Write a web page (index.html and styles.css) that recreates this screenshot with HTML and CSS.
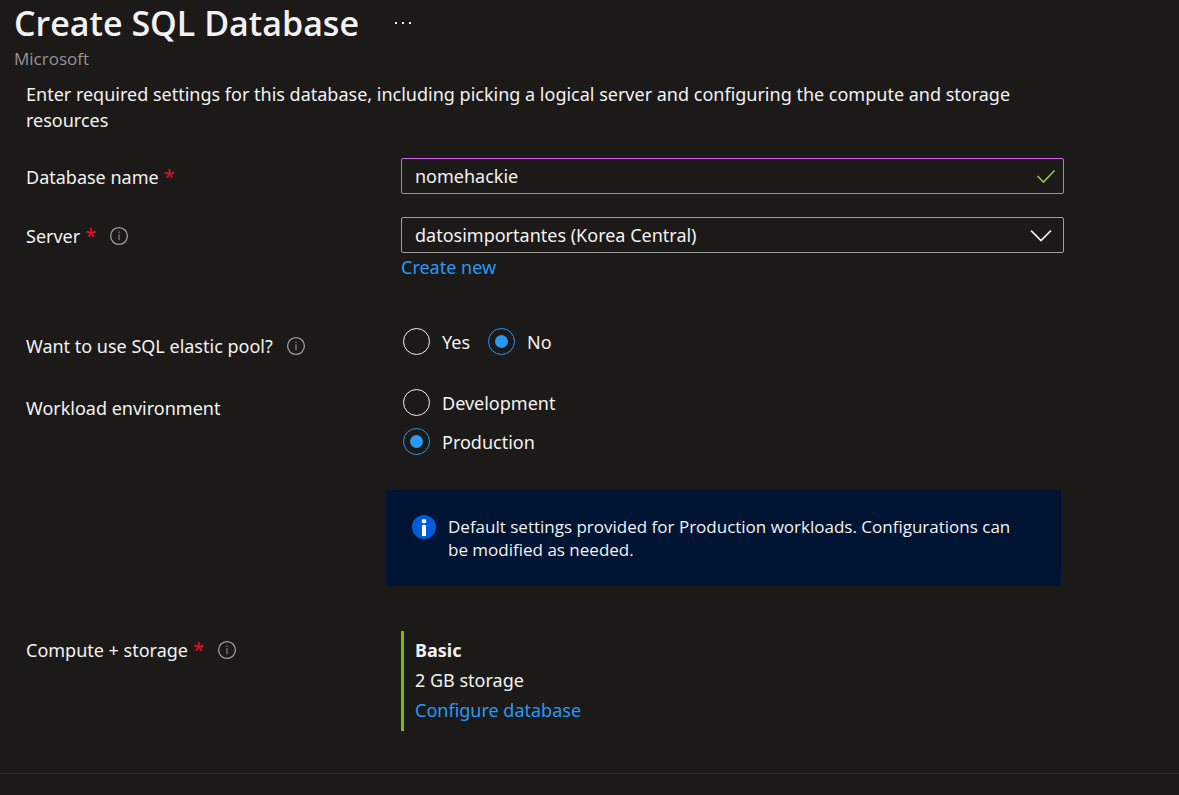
FILE: index.html
```html
<!DOCTYPE html>
<html lang="en">
<head>
<meta charset="utf-8">
<meta name="viewport" content="width=device-width, initial-scale=1">
<title>Create SQL Database</title>
<link rel="stylesheet" href="styles.css">
</head>
<body>
<svg class="sprite" aria-hidden="true">
  <symbol id="info" viewBox="0 0 20 20">
    <circle cx="10" cy="10" r="8.4" fill="none" stroke="currentColor" stroke-width="1.3"/>
    <path d="M10 8.2v6M10 5.4v1.6" fill="none" stroke="currentColor" stroke-width="1.3" opacity=".75"/>
  </symbol>
</svg>
<header class="page-header">
  <div class="title-row">
    <h1 class="title">Create SQL Database</h1>
    <button class="more" type="button" aria-label="More actions">
      <svg class="more-icon" viewBox="0 0 18 4" aria-hidden="true"><path d="M1 1h2v2H1zM8 1h2v2H8zM15 1h2v2h-2z" fill="currentColor"/></svg>
    </button>
  </div>
  <p class="publisher">Microsoft</p>
</header>
<main>
  <form class="form">
    <p class="intro">Enter required settings for this database, including picking a logical server and configuring the compute and storage resources</p>

    <div class="row">
      <div class="label-cell">
        <label for="db-name">Database name</label><span class="required">*</span>
      </div>
      <div class="field field-valid">
        <input class="control" id="db-name" type="text" value="nomehackie" required>
        <svg class="field-icon check" viewBox="0 0 20 20" aria-hidden="true"><path d="M1.5 10l6 6L18.500 4.500" fill="none" stroke="currentColor" stroke-width="1.6"/></svg>
      </div>
    </div>

    <div class="row row-server">
      <div class="label-cell">
        <label for="server">Server</label><span class="required">*</span>
        <svg class="info-icon" role="img" aria-label="Server information"><use href="#info"/></svg>
      </div>
      <div>
        <div class="field">
          <select class="control" id="server"><option>datosimportantes (Korea Central)</option></select>
          <svg class="field-icon chevron" viewBox="0 0 20 20" aria-hidden="true"><path d="M1 6L10 15 19 6" fill="none" stroke="currentColor" stroke-width="1.5"/></svg>
        </div>
        <a class="link create-link" href="#">Create new</a>
      </div>
    </div>

    <div class="row row-pool" role="radiogroup" aria-labelledby="pool-label">
      <div class="label-cell">
        <span id="pool-label">Want to use SQL elastic pool?</span>
        <svg class="info-icon" role="img" aria-label="Elastic pool information"><use href="#info"/></svg>
      </div>
      <div class="choices">
        <label class="choice"><input class="radio" type="radio" name="pool">Yes</label>
        <label class="choice"><input class="radio" type="radio" name="pool" checked>No</label>
      </div>
    </div>

    <div class="row row-env" role="radiogroup" aria-labelledby="env-label">
      <div class="label-cell"><span id="env-label">Workload environment</span></div>
      <div class="choices choices-stacked">
        <label class="choice"><input class="radio" type="radio" name="env">Development</label>
        <label class="choice"><input class="radio" type="radio" name="env" checked>Production</label>
      </div>
    </div>

    <div class="notice">
      <svg class="notice-icon" viewBox="0 0 24 24" aria-hidden="true">
        <circle cx="12" cy="12" r="12" fill="#015cda"/>
        <circle cx="12" cy="6.200" r="2.300" fill="#fff"/>
        <path d="M10 10h4v11h-4z" fill="#fff"/>
      </svg>
      <p class="notice-text">Default settings provided for Production workloads. Configurations can be modified as needed.</p>
    </div>

    <div class="row row-compute">
      <div class="label-cell">
        <span>Compute + storage</span><span class="required">*</span>
        <svg class="info-icon" role="img" aria-label="Compute and storage information"><use href="#info"/></svg>
      </div>
      <div class="tier">
        <strong>Basic</strong>
        <span>2 GB storage</span>
        <a class="link" href="#">Configure database</a>
      </div>
    </div>
  </form>
</main>
<footer class="page-footer"></footer>
</body>
</html>
```
FILE: styles.css
```css
* { box-sizing: border-box; }

body {
  margin: 0;
  min-height: 100vh;
  display: flex;
  flex-direction: column;
  background: #1b1a19;
  color: #f3f2f1;
  font-family: "Segoe UI", "Noto Sans", "Open Sans", sans-serif;
  font-size: 18px;
  line-height: 26px;
}

h1, p { margin: 0; }

.sprite { display: none; }

.page-header {
  padding-left: 14px;
  font-family: "Segoe UI", "Open Sans", sans-serif;
}

.title-row {
  display: flex;
  align-items: center;
  gap: 35px;
}

.title {
  font-size: 34px;
  line-height: 46px;
  font-weight: 600;
}

.more {
  display: flex;
  padding: 0;
  border: 0;
  background: none;
  color: inherit;
}

.more-icon { width: 18px; height: 4px; }

.publisher {
  color: #979593;
  font-size: 17px;
  line-height: 26px;
}

.form { padding: 9px 115px 42px 26px; }

.row {
  display: grid;
  grid-template-columns: 375px minmax(0, 1fr);
  align-items: start;
}

.intro { margin-bottom: 25px; }

.label-cell {
  display: flex;
  align-items: center;
  padding-top: 6px;
}

.required {
  margin-left: 5px;
  color: #e81123;
  font-size: 20px;
}

.info-icon {
  width: 20px;
  height: 20px;
  margin-left: 13px;
  color: #a19f9d;
}

.field {
  display: grid;
  align-items: center;
}

.field > * { grid-area: 1 / 1; }

.control {
  width: 100%;
  height: 36px;
  padding: 0 44px 0 13px;
  border: 1px solid #a19f9d;
  border-radius: 2px;
  outline: 0;
  background: #1b1a19;
  color: inherit;
  font: inherit;
  appearance: none;
}

.field-valid .control { border-color: #d45ff5; }

.field-icon {
  justify-self: end;
  pointer-events: none;
}

.check {
  width: 20px;
  height: 20px;
  margin-right: 8px;
  color: #92c353;
}

.chevron {
  width: 22px;
  height: 22px;
  margin-right: 12px;
}

.row-server { margin-top: 23px; }

.link {
  display: block;
  color: #2899f5;
  text-decoration: none;
}

.create-link { padding-top: 1px; }

.row-pool { margin-top: 48px; }
.row-pool .label-cell { padding-top: 5px; }

.choices {
  display: flex;
  gap: 18px;
  padding-left: 2px;
}

.choices-stacked {
  flex-direction: column;
  gap: 12px;
}

.choice {
  display: flex;
  align-items: center;
  gap: 12px;
}

.radio {
  display: grid;
  place-items: center;
  width: 27px;
  height: 27px;
  margin: 0;
  border: 1px solid #f3f2f1;
  border-radius: 50%;
  appearance: none;
}

.radio:checked { border-color: #2899f5; }

.radio:checked::before {
  content: "";
  width: 13px;
  height: 13px;
  border-radius: 50%;
  background: #2899f5;
}

.row-env { margin-top: 30px; }

.notice {
  display: flex;
  gap: 12px;
  margin: 35px 3px 0 360px;
  padding: 25px 40px 25px 26px;
  border-radius: 3px;
  background: #001433;
  font-family: "Segoe UI", "Open Sans", sans-serif;
  font-size: 17px;
  line-height: 23px;
}

.notice-icon {
  flex: none;
  width: 24px;
  height: 24px;
}

.row-compute { margin-top: 45px; }

.tier {
  display: flex;
  flex-direction: column;
  gap: 4px;
  padding: 6px 0 8px 11px;
  border-left: 3px solid #7fba00;
}

.page-footer {
  flex: 1;
  border-top: 1px solid #323130;
}
```
